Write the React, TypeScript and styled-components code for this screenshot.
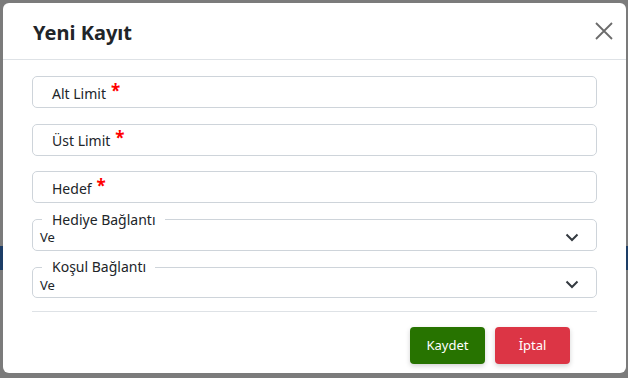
import styled, { createGlobalStyle } from "styled-components"

const GlobalStyle = createGlobalStyle`
  html, body {
    margin: 0;
    padding: 0;
  }
  body {
    font-family: "Segoe UI", "Noto Sans", sans-serif;
    color: #212529;
    background: linear-gradient(
      to bottom,
      #7b7b7b 0,
      #7b7b7b 246px,
      #1d3d66 246px,
      #1d3d66 270px,
      #7b7b7b 270px
    );
    min-height: 378px;
  }
`

type SelectProps = { label: string; value: string }

function SelectField({ label, value }: SelectProps) {
  return (
    <Fieldset>
      <Legend>{label}</Legend>
      <SelectRow>
        <SelectValue>{value}</SelectValue>
        <svg width="14" height="9" viewBox="0 0 14 9">
          <path d="M1.5 1.5 L7 7 L12.5 1.5" fill="none" stroke="#343a40" strokeWidth="2" />
        </svg>
      </SelectRow>
    </Fieldset>
  )
}

export default function App() {
  return (
    <>
      <GlobalStyle />
      <Modal>
        <Header>
          <Title>Yeni Kayıt</Title>
          <CloseButton aria-label="Kapat">
            <svg width="18" height="18" viewBox="0 0 18 18">
              <path d="M1 1 L17 17 M17 1 L1 17" stroke="#6b6b6b" strokeWidth="1.8" />
            </svg>
          </CloseButton>
        </Header>
        <Body>
          <InputBox>
            <FieldLabel>Alt Limit</FieldLabel>
            <Required>*</Required>
          </InputBox>
          <InputBox>
            <FieldLabel>Üst Limit</FieldLabel>
            <Required>*</Required>
          </InputBox>
          <InputBox>
            <FieldLabel>Hedef</FieldLabel>
            <Required>*</Required>
          </InputBox>
          <SelectField label="Hediye Bağlantı" value="Ve" />
          <SelectField label="Koşul Bağlantı" value="Ve" />
          <Divider />
        </Body>
        <Footer>
          <Button $variant="save">Kaydet</Button>
          <Button $variant="cancel">İptal</Button>
        </Footer>
      </Modal>
    </>
  )
}

const Modal = styled.div`
  margin: 3px 2px 0 3px;
  width: 623px;
  height: 370px;
  box-sizing: border-box;
  background: #ffffff;
  border-radius: 6px;
  display: flex;
  flex-direction: column;
  overflow: hidden;
`

const Header = styled.div`
  height: 57px;
  box-sizing: border-box;
  border-bottom: 1px solid #dee2e6;
  display: flex;
  align-items: center;
  justify-content: space-between;
  padding: 0 12px 0 30px;
`

const Title = styled.h5`
  margin: 0;
  font-size: 20px;
  font-weight: 700;
  color: #212529;
  padding-top: 2px;
`

const CloseButton = styled.button`
  border: none;
  background: transparent;
  padding: 0;
  width: 20px;
  height: 20px;
  display: flex;
  align-items: center;
  justify-content: center;
  cursor: pointer;
`

const Body = styled.div`
  padding: 16px 29px 0 29px;
  display: flex;
  flex-direction: column;
  gap: 15.5px;
`

const InputBox = styled.div`
  height: 32px;
  box-sizing: border-box;
  border: 1px solid #ced4da;
  border-radius: 5px;
  display: flex;
  align-items: center;
  padding: 2px 0 0 19px;
`

const FieldLabel = styled.span`
  font-size: 14px;
  color: #212529;
`

const Required = styled.span`
  color: #ff0000;
  font-size: 17px;
  font-weight: 700;
  margin-left: 5px;
  position: relative;
  top: -3px;
`

const Fieldset = styled.fieldset`
  margin: -6px 0 0 0;
  padding: 0 17px 0 7px;
  border: 1px solid #ced4da;
  border-radius: 5px;
  min-width: 0;
`

const Legend = styled.legend`
  margin-left: 2px;
  padding: 0 9px 0 10px;
  font-size: 14px;
  line-height: 14px;
  color: #212529;
`

const SelectRow = styled.div`
  height: 25px;
  display: flex;
  align-items: center;
  justify-content: space-between;
  margin-top: -2px;
`

const SelectValue = styled.span`
  font-size: 13px;
  color: #212529;
`

const Divider = styled.div`
  height: 1px;
  background: #dee2e6;
  margin-top: -3px;
`

const Footer = styled.div`
  display: flex;
  justify-content: flex-end;
  gap: 10px;
  padding: 15px 56px 0 0;
`

const Button = styled.button<{ $variant: "save" | "cancel" }>`
  width: 75px;
  height: 37px;
  border: none;
  border-radius: 4px;
  font-family: "Segoe UI", "Noto Sans", sans-serif;
  font-size: 13px;
  color: #ffffff;
  background: ${(p) => (p.$variant === "save" ? "#277300" : "#dc3545")};
  box-shadow: 0 2px 5px rgba(0, 0, 0, 0.18);
  cursor: pointer;
`
